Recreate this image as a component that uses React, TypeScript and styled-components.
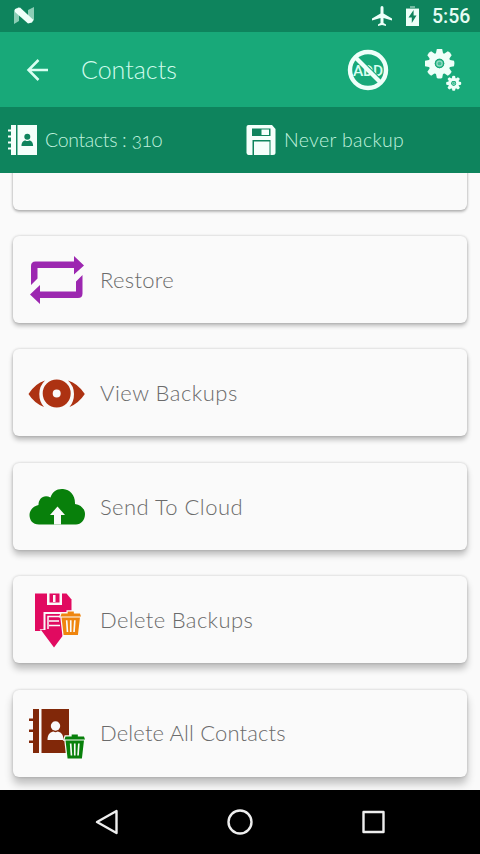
import React from "react";
import styled, { createGlobalStyle } from "styled-components";

const GlobalStyle = createGlobalStyle`
  * { box-sizing: border-box; }
  body { margin: 0; background: #fafafa; }
`;

const Screen = styled.div`
  width: 480px;
  height: 854px;
  display: flex;
  flex-direction: column;
  overflow: hidden;
  background: #fafafa;
  font-family: Lato, "Open Sans", sans-serif;
  font-weight: 300;
  svg { display: block; flex: none; }
`;

const StatusBar = styled.header`
  height: 32px;
  flex: none;
  display: flex;
  align-items: center;
  padding: 0 11px 0 14px;
  background: #0e845d;
`;

const Clock = styled.time`
  font: 500 19.5px/32px Roboto, sans-serif;
  color: #e6fbf3;
  margin-left: 13px;
  width: 37px;
  white-space: nowrap;
  padding-top: 1px;
`;

const Toolbar = styled.nav`
  height: 75px;
  flex: none;
  display: flex;
  align-items: center;
  padding: 0 18px 0 26px;
  background: #18a979;
`;

const Spacer = styled.div`
  flex: 1;
`;

const Gap = styled.div<{ $w: number }>`
  flex: none;
  width: ${(p) => p.$w}px;
`;

const Text = styled.span<{ $size: number; $spacing?: number; $color: string }>`
  font-size: ${(p) => p.$size}px;
  letter-spacing: ${(p) => p.$spacing ?? 0}px;
  color: ${(p) => p.$color};
  line-height: 1.2;
  white-space: nowrap;
  font-variant-numeric: oldstyle-nums;
`;

const Title = styled(Text)`
  margin-left: 31px;
  padding-bottom: 2px;
`;

const InfoBar = styled.section`
  height: 66px;
  flex: none;
  display: grid;
  grid-template-columns: 238px 1fr;
  padding-left: 8px;
  background: #0e845d;
`;

const InfoItem = styled.div`
  display: flex;
  align-items: center;
  gap: 8px;
`;

const List = styled.main`
  flex: 1;
  min-height: 0;
  overflow: hidden;
  padding: 0 13px;
  display: flex;
  flex-direction: column;
  gap: 26.4px;
`;

const Card = styled.article<{ $depth: number; $clipped?: boolean }>`
  height: 87px;
  flex: none;
  margin-top: ${(p) => (p.$clipped ? -50.4 : 0)}px;
  display: flex;
  align-items: center;
  gap: 15px;
  padding-left: 15px;
  border-radius: 6px;
  background: #fafafa;
  box-shadow:
    0 0 3px rgba(0, 0, 0, 0.2),
    0 ${(p) => p.$depth}px ${(p) => p.$depth + 1}px rgba(0, 0, 0, 0.24);
`;

const CardLabel = styled(Text)`
  padding-top: 1px;
`;

const NavBar = styled.footer`
  height: 64px;
  flex: none;
  display: flex;
  align-items: center;
  justify-content: space-between;
  padding: 0 94px;
  background: #000;
`;

const NougatIcon = () => (
  <svg width="20" height="18" viewBox="0 0 20 18">
    <path d="M0 3 5 0v14l-5 3zM14 3l6-3v13l-6 3z" fill="#8bcdb5" />
    <path d="M1 2 6 .5 19.500 13 18 15.500 14 16.500 1 5z" fill="#effff9" />
  </svg>
);

const PlaneIcon = () => (
  <svg width="20" height="20" viewBox="0 0 20 20" fill="#edfff9">
    <path d="M10 0c1 0 1.500.8 1.500 2v5.500L20 12.500v2L11.500 12v5l2.500 1.600V20l-4-1-4 1v-1.400L8.500 17v-5L0 14.500v-2l8.500-5V2C8.500.8 9 0 10 0z" />
  </svg>
);

const BatteryIcon = () => (
  <svg width="13" height="20" viewBox="0 0 13 20">
    <path d="M4 0h5v2h4v18H0V2h4z" fill="#edfff9" />
    <path d="M4 0h5v2h4v1H0V2h4z" fill="#72b9a0" />
    <path d="M7.600 4 2.500 11.500h3.300V17L10.500 9.500H7.600z" fill="#0e845d" />
  </svg>
);

const BackArrow = () => (
  <svg width="24" height="22" viewBox="0 0 24 22" fill="none" stroke="#d9fff2" strokeWidth="2.500">
    <path d="M12.500 1 2.500 11l10 10M2.500 11H22" />
  </svg>
);

const NoAdsIcon = () => (
  <svg width="42" height="42" viewBox="0 0 42 42">
    <path d="m9.500 6 25 25" stroke="#18a979" strokeWidth="5" />
    <text x="6" y="26.500" fontFamily="Roboto, sans-serif" fontSize="15.500" fontWeight="500" textLength="30" fill="#d9fff2">ADD</text>
    <path d="m10.500 7 23 23" stroke="#18a979" strokeWidth="1.400" />
    <circle cx="21" cy="21" r="18" fill="none" stroke="#effff9" strokeWidth="4.400" />
    <path d="m8 8 26 26" stroke="#effff9" strokeWidth="4.200" />
  </svg>
);

const TEETH = [0, 45, 90, 135, 180, 225, 270, 315];

const Gear = ({ cx, cy, r }: { cx: number; cy: number; r: number }) => (
  <g transform={`translate(${cx} ${cy}) scale(${r / 14})`}>
    {TEETH.map((a) => (
      <path key={a} d="M-3.600-9-2.600-14Q0-15 2.600-14L3.600-9z" transform={`rotate(${a})`} fill="#effff9" />
    ))}
    <circle r="7.500" fill="none" stroke="#effff9" strokeWidth="6" />
    <circle r="4.600" fill="#18a979" />
    <circle r="3.200" fill="#8edac0" />
    <circle r="1.800" fill="#3fbd94" />
  </g>
);

const GearsIcon = () => (
  <svg width="37" height="42" viewBox="0 0 37 42">
    <Gear cx={14.500} cy={14.500} r={14.500} />
    <Gear cx={28.700} cy={34.300} r={7.300} />
  </svg>
);

const AddressBookIcon = () => (
  <svg width="29" height="32" viewBox="0 0 29 32">
    <path d="M3 1h5v30H3zM9.500 1H29v30H9.500zM0 5.500h4v2H0zm0 6h4v2H0zm0 6h4v2H0zm0 6h4v2H0z" fill="#f5fffb" />
    <circle cx="19.300" cy="12.700" r="3" fill="#0e845d" />
    <path d="M13.500 22c0-4 2-5.500 4-5.500q1.800 1 3.600 0c2 0 4 1.500 4 5.500z" fill="#0e845d" />
  </svg>
);

const FloppyIcon = () => (
  <svg width="30" height="32" viewBox="0 0 30 32">
    <path d="M2.500 1H26l3.500 4v23.500q0 2.500-2.500 2.500H2.500Q1 31 .5 29V3q0-2 2-2z" fill="#f5fffb" />
    <path d="M6 4.500h18.500v7.500H6zM6.500 16h18v15h-18z" fill="#0e845d" />
    <path d="M15.500 5.500h7.500v5.500h-7.500zM8 17.500h15.500v13.500H8z" fill="#f5fffb" />
  </svg>
);

const RestoreIcon = () => (
  <svg width="57" height="50" viewBox="0 0 57 50" fill="#9c27b0">
    <path d="M3 30V11q0-4.500 4.500-4.500H46V1l10 9.500L46 19.500V13H9.500v10.500z" />
    <path d="M54.500 20v18.500q0 4.500-4.500 4.500H12v6L2 39.500l10-9.500v6.500h36V26.500z" />
  </svg>
);

const EyeIcon = () => (
  <svg width="57" height="50" viewBox="0 0 57 50" fill="#ad3212">
    <circle cx="28.700" cy="25.500" r="9" fill="none" stroke="#ad3212" strokeWidth="10" />
    <path d="M.5 26Q7 15.500 17 12.500 11.300 18 11.300 26T16 39Q6 35 .5 26zM56.800 26Q50 15.500 40 12.500 46 18 46 26T41.500 39Q51 35 56.800 26z" />
  </svg>
);

const CloudIcon = () => (
  <svg width="57" height="50" viewBox="0 0 57 50">
    <path d="M11 43.500C4.500 43.500 1.500 39 1.500 34c0-5 4-9 9-10 0-6 5-11 12-7.500C24 11 29 7.500 35 8c7 .5 12 6 12 14v1c6 1 10 5 10 10 0 6-4 10.500-9 10.500z" fill="#08800b" />
    <path d="M29.500 25.500 37 34h-4v9.500h-7V34h-4z" fill="#fafafa" />
  </svg>
);

const Bin = ({ x, y, w, h, color }: { x: number; y: number; w: number; h: number; color: string }) => (
  <g transform={`translate(${x} ${y}) scale(${w / 20} ${h / 24})`}>
    <path d="M7 2V0h6v2h6l1 3H0l1-3zM1 6h18L17 24H3z" fill={color} stroke="#fafafa" strokeWidth="2.400" paintOrder="stroke" />
    <path d="m6 9 .8 12M10 9v12M14 9l-.8 12" stroke="#fafafa" strokeWidth="1.600" />
  </g>
);

const DeleteBackupIcon = () => (
  <svg width="57" height="58" viewBox="0 0 57 58">
    <path d="M7 2.500h31.500l5 6V40H7z" fill="#e10a60" />
    <path d="M19 2h2.500v9.500h10V2H34v12H19zM15.500 21H45v20H15.500z" fill="#fafafa" />
    <path d="M25 4h2.500v7H25z" fill="#fafafa" />
    <path d="M17.500 23H35v16h4L26 56.500 13 39h4.500z" fill="#e10a60" stroke="#fafafa" strokeWidth="1.500" paintOrder="stroke" />
    <path d="M20 38V25.500h12M21 30h10M21 34.500h11" fill="none" stroke="#fafafa" strokeWidth="1.500" />
    <Bin x={32.500} y={20.500} w={20.500} h={23.500} color="#ef850e" />
  </svg>
);

const DeleteContactsIcon = () => (
  <svg width="57" height="58" viewBox="0 0 57 58">
    <path d="M5 5h6v44H5zM13.500 5H41v44H13.500zM1 14.500h5V17H1zm0 11h5V28H1zm0 11h5V39H1z" fill="#812809" />
    <circle cx="27.500" cy="22" r="4.700" fill="#fafafa" />
    <path d="M19.500 36c0-6 3-8 6-8.500q2 1.500 4 0c3 .5 6 2.500 6 8.500z" fill="#fafafa" />
    <Bin x={36.500} y={30.500} w={20.500} h={24} color="#08800b" />
  </svg>
);

const actions = [
  { label: "Restore", Icon: RestoreIcon, depth: 3, spacing: 0.3 },
  { label: "View Backups", Icon: EyeIcon, depth: 4, spacing: 0.5 },
  { label: "Send To Cloud", Icon: CloudIcon, depth: 5, spacing: 0.45 },
  { label: "Delete Backups", Icon: DeleteBackupIcon, depth: 6, spacing: 0.36 },
  { label: "Delete All Contacts", Icon: DeleteContactsIcon, depth: 7, spacing: 0.15 },
];

export default function App() {
  return (
    <Screen>
      <GlobalStyle />
      <StatusBar>
        <NougatIcon />
        <Spacer />
        <PlaneIcon />
        <Gap $w={14} />
        <BatteryIcon />
        <Clock>5:56</Clock>
      </StatusBar>
      <Toolbar>
        <BackArrow />
        <Title $size={25} $color="#d0fbec">Contacts</Title>
        <Spacer />
        <NoAdsIcon />
        <Gap $w={36} />
        <GearsIcon />
      </Toolbar>
      <InfoBar>
        <InfoItem>
          <AddressBookIcon />
          <Text $size={19.5} $spacing={-0.33} $color="#c0f2df">Contacts : 310</Text>
        </InfoItem>
        <InfoItem>
          <FloppyIcon />
          <Text $size={19.5} $spacing={0.35} $color="#c0f2df">Never backup</Text>
        </InfoItem>
      </InfoBar>
      <List>
        <Card $depth={2} $clipped />
        {actions.map(({ label, Icon, depth, spacing }) => (
          <Card key={label} $depth={depth}>
            <Icon />
            <CardLabel $size={22} $spacing={spacing} $color="#6b6b6b">{label}</CardLabel>
          </Card>
        ))}
      </List>
      <NavBar>
        <svg width="25" height="28" viewBox="0 0 25 28" fill="none" stroke="#eee" strokeWidth="2.400" strokeLinejoin="round">
          <path d="M22.500 3v22L3 14z" />
        </svg>
        <svg width="28" height="28" viewBox="0 0 28 28" fill="none" stroke="#eee" strokeWidth="2.400">
          <circle cx="14" cy="14" r="11.500" />
        </svg>
        <svg width="25" height="28" viewBox="0 0 25 28" fill="none" stroke="#eee" strokeWidth="2.400" strokeLinejoin="round">
          <path d="M2.500 4h20v20h-20z" />
        </svg>
      </NavBar>
    </Screen>
  );
}
